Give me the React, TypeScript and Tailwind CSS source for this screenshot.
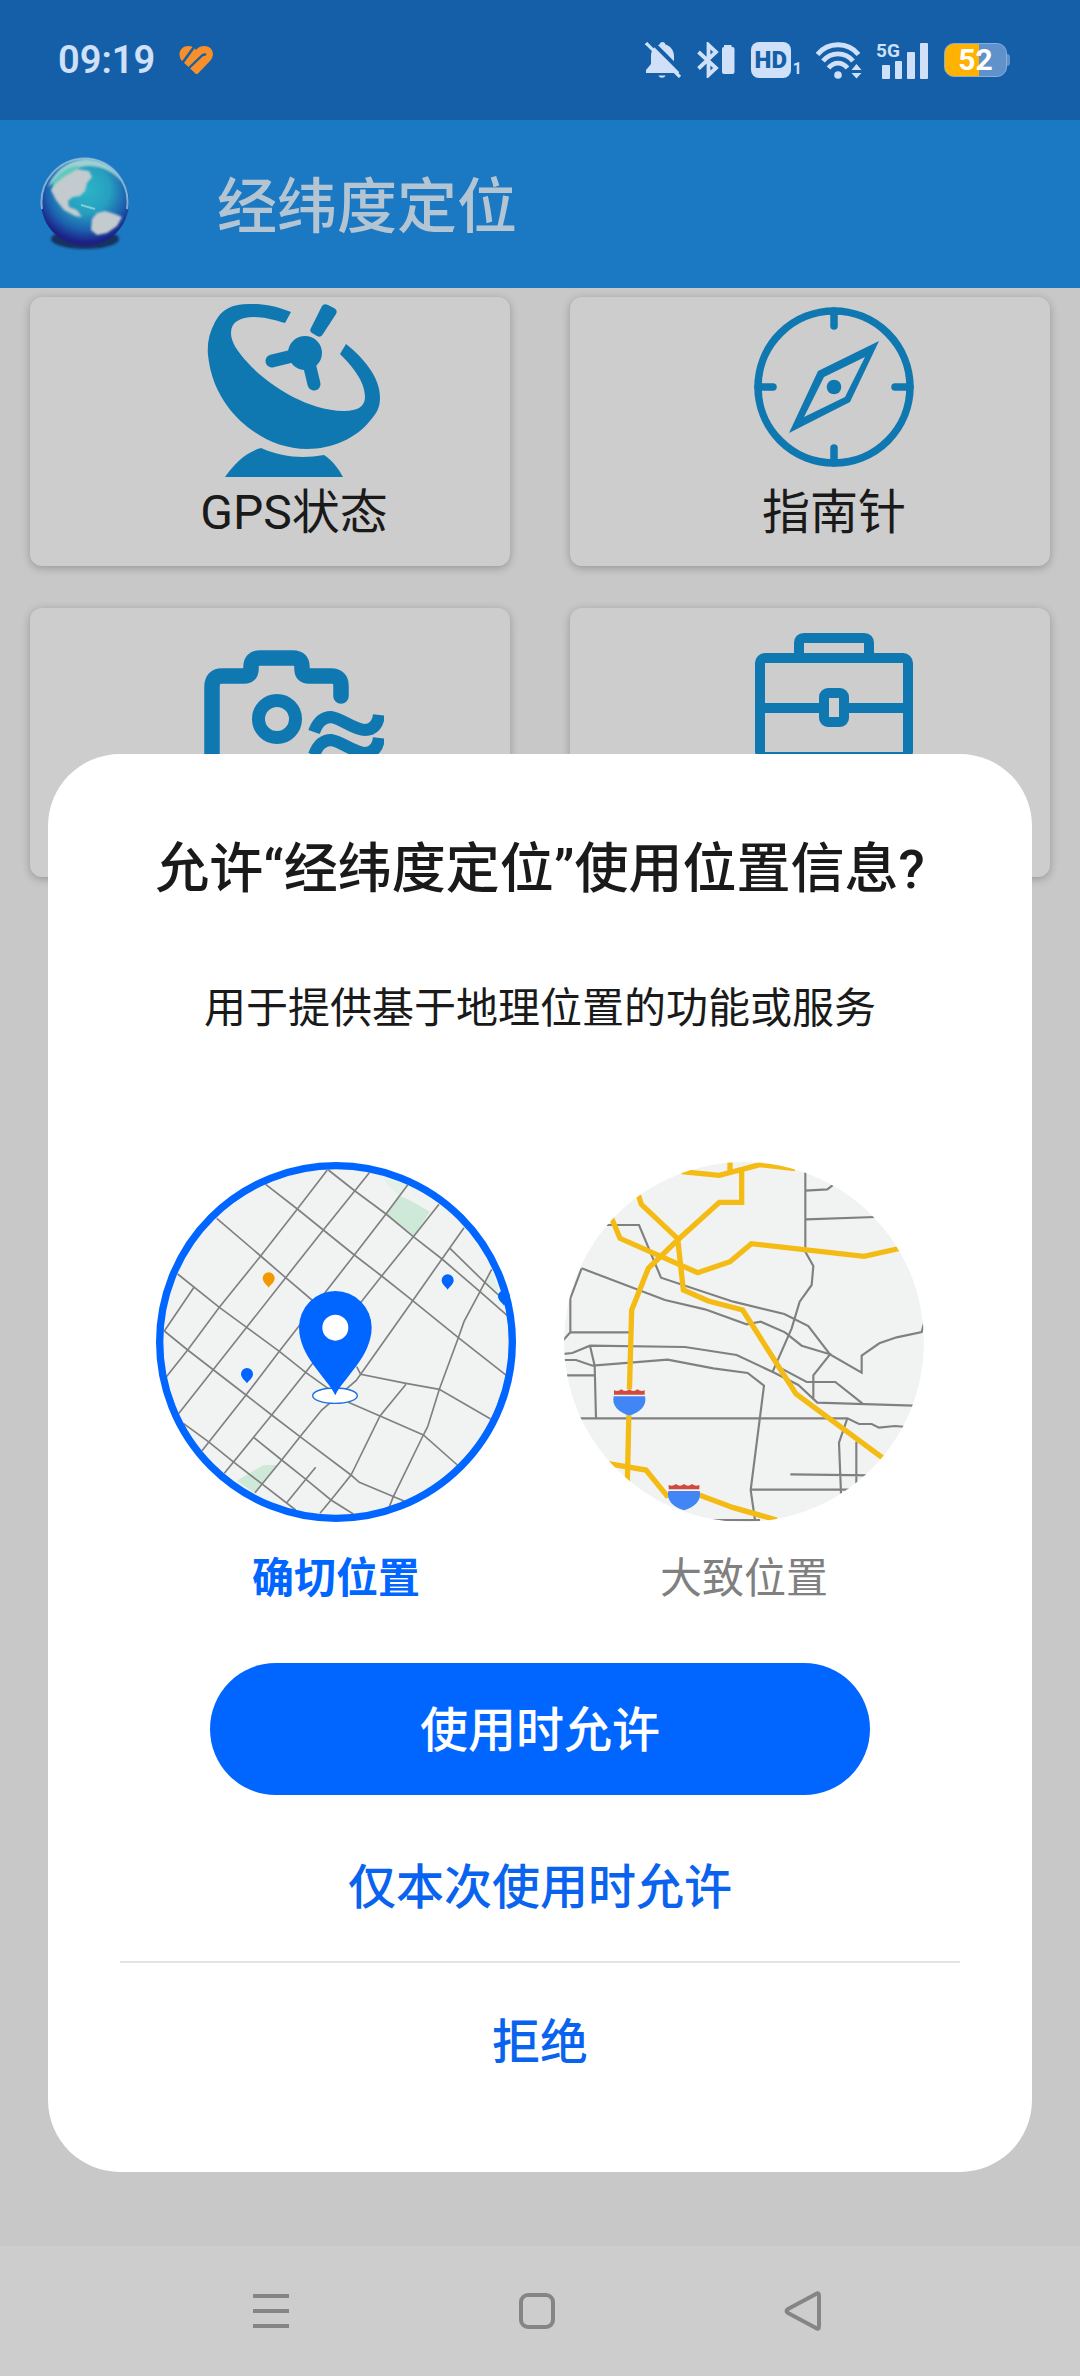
"use client";

import { useState } from "react";

type Accuracy = "precise" | "approximate";

const ICON_BLUE = "#0f78b1";
const STATUS_TINT = "#cfe0f8";

function HeartLogo() {
  return (
    <svg width="34" height="28" viewBox="0 0 34 28" fill="none">
      <path d="M17 28L3 15C-3 7 3 0 9 0C13 0 15 1.500 17 4C19 1.500 22 0 25 0C33 0 37 8 31 15L19 27.500Q17 29 15.500 27Z" fill="#f78f2b" />
      <path d="M16.500-1L3 17.500" stroke="#145fa8" strokeWidth="2.600" />
      <path d="M9 23L22.500 10Q25 7.500 27 9" stroke="#145fa8" strokeWidth="2.400" />
    </svg>
  );
}

function BellOffIcon() {
  return (
    <svg width="38" height="36" viewBox="0 0 38 36" fill={STATUS_TINT}>
      <path d="M17.500 0C15.800 0 14.800 1 14.600 2.500C8.500 4 6 9 6 14V22L1 28V31H34V29L29 22V14C29 9 26 4 20.400 2.500C20.200 1 19.200 0 17.500 0Z" />
      <path d="M13.500 33.500H20.500C19.500 36.500 14.500 36.500 13.500 33.500Z" />
      <path d="M4-3L38 31" stroke="#145fa8" strokeWidth="4" />
      <path d="M1 1L35 35" stroke={STATUS_TINT} strokeWidth="3.200" />
    </svg>
  );
}

function BluetoothIcon() {
  return (
    <svg width="40" height="36" viewBox="0 0 40 36" fill="none">
      <path d="M1.500 10L19 26L11.500 33V3L19 10L1.500 26.500" stroke={STATUS_TINT} strokeWidth="3.800" />
      <path d="M27 4H34.500" stroke={STATUS_TINT} strokeWidth="2" />
      <rect x="25" y="5" width="12.500" height="27" rx="2" fill={STATUS_TINT} />
    </svg>
  );
}

function WifiIcon() {
  return (
    <svg width="46" height="37" viewBox="0 0 46 37" fill="none">
      <g stroke={STATUS_TINT} strokeWidth="4.800">
        <path d="M1.500 12.500C12-.5 32-.5 42.500 12.500" />
        <path d="M7 19C15 9.500 29 9.500 37 19" />
        <path d="M12.500 26C18 19.500 26 19.500 31.500 26" />
      </g>
      <circle cx="22" cy="33" r="3.800" fill={STATUS_TINT} />
      <path d="M40.500 22L45.500 28H35.500ZM40.500 36.500L35.500 31H45.500Z" fill={STATUS_TINT} />
    </svg>
  );
}

function SignalIcon() {
  return (
    <svg className="overflow-visible" width="54" height="49" viewBox="0 -6 54 49" fill={STATUS_TINT}>
      <text x="0" y="15" fontSize="19" fontWeight="700" fontFamily="Roboto, sans-serif">
        5G
      </text>
      <rect x="6" y="23" width="8" height="14" rx="1" />
      <rect x="19" y="19" width="7" height="18" rx="1" />
      <rect x="31" y="10" width="8" height="27" rx="1" />
      <rect x="44" y="1" width="8" height="36" rx="1" />
    </svg>
  );
}

function GlobeLogo() {
  return (
    <svg className="shrink-0" width="92" height="94" viewBox="0 0 92 94" fill="none">
      <defs>
        <radialGradient id="ocean" cx="0.52" cy="0.36" r="0.66">
          <stop offset="0" stopColor="#2cb4c6" />
          <stop offset="0.4" stopColor="#279fc0" />
          <stop offset="0.7" stopColor="#1c5fae" />
          <stop offset="0.9" stopColor="#1c2287" />
          <stop offset="1" stopColor="#241d74" />
        </radialGradient>
        <filter id="soft" x="-20%" y="-20%" width="140%" height="140%">
          <feGaussianBlur stdDeviation="1" />
        </filter>
      </defs>
      <ellipse cx="46" cy="82" rx="34" ry="10" fill="#16305f" filter="url(#soft)" />
      <circle cx="46" cy="45" r="44" fill="url(#ocean)" />
      <path d="M9 30C17 10 34 2 48 2C66 3 78 13 84 26C74 14 62 9 49 9C34 10 24 17 9 30Z" fill="#9fd0d3" filter="url(#soft)" />
      <path d="M3 52C-1 24 20 2 46 1.500C72 2 92 26 88 52" stroke="#9cc4dd" strokeOpacity="0.8" strokeWidth="2" />
      <path d="M14 25C20 15 30 9 40 9L36 18L24 26L14 36Z" fill="#5fcabc" filter="url(#soft)" />
      <g fill="#c3cbcf" filter="url(#soft)">
        <path d="M12 33C16 26 24 20 32 16L38 12L50 14L53 20L48 26L46 34L41 39L34 40L29 44L30 50L38 53L43 60L36 59L25 53L17 43Z" />
        <path d="M53 62L58 56L66 54L76 57L83 60L78 69L68 76L58 78L52 73Z" />
      </g>
      <path d="M42 48L56 52" stroke="#7fcfd6" strokeWidth="2" />
    </svg>
  );
}

function SatelliteIcon() {
  return (
    <svg width="180" height="180" viewBox="0 0 180 180" fill={ICON_BLUE}>
      <path d="M87 12C72 6 60 4 50 4C30 3 18 8 11 22C5 33 3 44 4 55C6 75 13 92 24 107C42 131 72 149 103 149C128 149 152 138 165 122C173 113 176 108 176 97C176 78 160 58 142 44L136 54C146 64 161 80 161 97C161 106 154 111 140 111C122 111 103 104 89 97C68 85 54 74 44 63C33 51 27 42 27 33C27 22 36 17 50 17C60 17 71 20 81 23Z" />
      <circle cx="101" cy="53" r="17" />
      <g stroke={ICON_BLUE} strokeWidth="13" strokeLinecap="round">
        <path d="M101 53L68 61" />
        <path d="M103 55L110 84" />
      </g>
      <path d="M118 6Q120 3 124 5L130 8Q134 10 132 14L119 34Q117 38 113 36L108 33Q105 31 107 28Z" />
      <path d="M21 177C30 164 42 152 57 148C78 157 98 159 120 155C129 161 134 168 139 177Z" />
    </svg>
  );
}

function CompassIcon() {
  return (
    <svg width="180" height="180" viewBox="0 0 180 180" fill="none">
      <circle cx="90" cy="87" r="76" stroke={ICON_BLUE} strokeWidth="7.500" />
      <path d="M90 11V26M90 148V163M14 87H29M151 87H166" stroke={ICON_BLUE} strokeWidth="7.500" strokeLinecap="round" />
      <path
        fillRule="evenodd"
        d="M135 41L106 102L45 133L74 71ZM121 57L80 77L60 117L101 97Z"
        fill={ICON_BLUE}
      />
      <circle cx="90" cy="87" r="7.300" fill={ICON_BLUE} />
    </svg>
  );
}

function CameraIcon() {
  return (
    <svg width="180" height="180" viewBox="0 0 180 180" fill="none" stroke={ICON_BLUE}>
      <path
        d="M8 150V76Q8 65 18 65H40Q47 65 47 58V56Q47 47 56 47H89Q98 47 98 56V58Q98 65 105 65H127Q137 65 137 75V85"
        strokeWidth="15.500"
        strokeLinecap="round"
      />
      <circle cx="73" cy="108" r="18.500" strokeWidth="13" />
      <path d="M110 121C114 110 120 106 127 106C137 107 150 119 161 119C170 119 174 113 175 104" strokeWidth="12" />
      <path d="M110 144C114 133 120 129 127 129C137 130 150 142 161 142C170 142 174 136 175 127" strokeWidth="12" />
    </svg>
  );
}

function BriefcaseIcon() {
  return (
    <svg width="180" height="180" viewBox="0 0 180 180" fill="none" stroke={ICON_BLUE} strokeWidth="10">
      <rect x="16" y="47" width="148" height="99" rx="5" />
      <path d="M55 45V32Q55 27 60 27H120Q125 27 125 32V45" />
      <path d="M16 97H80M100 97H164" />
      <rect x="80" y="82" width="20" height="29" rx="4" />
    </svg>
  );
}

function SmallPin({ x, y, color }: { x: number; y: number; color: string }) {
  return (
    <path
      d="M0 45C-5 36-18 30-18 17A18 18 0 0 1 18 17C18 30 5 36 0 45Z"
      transform={`translate(${x} ${y})`}
      fill={color}
    />
  );
}

function PreciseMap() {
  return (
    <svg className="block w-full" viewBox="48 66 1080 1080" fill="none">
      <circle cx="588" cy="606" r="529" fill="#f1f3f3" />
      <path d="M725 112L805 135L778 170ZM1055 395L1085 475L1035 430Z" fill="#e3f1e8" />
      <path d="M778 168L805 178L870 215L822 287L738 222ZM290 1022L370 975L410 975L345 1060Z" fill="#cfe9d9" />
      <g stroke="#808080" strokeWidth="5">
        <path d="M562 90L472 207L362 348L238 502L143 630L78 712" />
        <path d="M688 98L550 270L437 413L320 562L115 822" />
        <path d="M803 135L738 222L643 345L418 634L318 765L186 932" />
        <path d="M897 193L820 290L725 408L497 697L395 825L253 1000" />
        <path d="M972 263L906 357L818 482L662 703L648 722L545 810L480 890L425 960L345 1058" />
        <path d="M1055 388L1020 455L972 545L955 593L898 748L863 860L850 885L760 1070L748 1100" />
        <path d="M798 733L720 828L648 975L633 1005L573 1080L540 1120" />
        <path d="M527 982L440 1088M162 442L73 573" />
        <path d="M565 90L645 153L738 222L820 290L906 357L1020 455L1102 527" />
        <path d="M377 133L472 207L550 270L643 345L725 408L818 482L955 593L1100 707" />
        <path d="M230 235L362 348L437 413L530 492" />
        <path d="M113 402L238 502L320 562L418 634L497 697L565 746" />
        <path d="M73 573L143 630L318 765L395 825L480 890L633 1005L658 1027L792 1083" />
        <path d="M130 850L205 905L282 967L467 1110" />
        <path d="M342 893L425 960L498 1018L573 1080L640 1122" />
        <path d="M650 680L662 703L798 730L898 748L1052 837" />
        <path d="M625 787L720 828L850 885L952 975" />
        <path d="M930 325L1035 428L1085 474" />
      </g>
      <SmallPin x={386} y={398} color="#f29900" />
      <SmallPin x={923} y={404} color="#0066ff" />
      <SmallPin x={321} y={685} color="#0066ff" />
      <SmallPin x={1092} y={452} color="#0066ff" />
      <ellipse cx="585" cy="767" rx="67" ry="23" fill="#fff" stroke="#1a6fe0" strokeWidth="4" />
      <path d="M586 766C560 712 477 650 477 562A109 109 0 0 1 695 562C695 650 612 712 586 766Z" fill="#0066ff" />
      <circle cx="586" cy="563" r="39" fill="#fff" />
      <circle cx="588" cy="606" r="529" stroke="#0066ff" strokeWidth="22" />
    </svg>
  );
}

function RouteShield({ x, y }: { x: number; y: number }) {
  return (
    <g transform={`translate(${x} ${y})`}>
      <path d="M-48-2H48V18C52 48 30 66 0 78C-30 66-52 48-48 18Z" fill="#f1f3f3" />
      <path d="M-46 0Q-36 7-24-2Q-12 8 0-2Q12 8 24-2Q36 7 46 0V14H-46Z" fill="#d04a3d" />
      <path d="M-47 19H47C54 46 32 68 0 77C-32 68-54 46-47 19Z" fill="#4285f4" />
    </g>
  );
}

function ApproximateMap() {
  return (
    <svg className="block w-full" viewBox="72 66 1080 1080" fill="none">
      <defs>
        <clipPath id="area">
          <circle cx="612" cy="606" r="540" />
        </clipPath>
      </defs>
      <g clipPath="url(#area)">
        <rect x="72" y="66" width="1080" height="1080" fill="#f1f3f3" />
        <g stroke="#808080" strokeWidth="6.500">
          <path d="M796 90V335L820 378L815 435L779 485L755 565L697 697" />
          <path d="M796 152L862 148L885 130M798 238L1005 231" />
          <path d="M195 255H297L363 413L580 485L733 522L805 558L870 643L965 698V647L1018 610L1070 592L1145 576L1152 550" />
          <path d="M125 385L375 480L495 508L620 553L662 545L735 577L785 617L870 643L820 706V775" />
          <path d="M125 385L91 475V577L70 600M91 577H272" />
          <path d="M70 642L97 639L150 617L435 621L590 645L700 697L775 735L832 788L1120 797" />
          <path d="M70 660H108L158 677L383 659L520 685L623 699L672 737L632 1050L645 1140" />
          <path d="M150 617L164 677L168 835M75 706H164M110 835H922L957 852H995L1017 863L1065 858L1100 861" />
          <path d="M718 682L800 726H886L967 790" />
          <path d="M922 835L897 908L903 1060M949 905V1040M751 1003L990 1006M632 1049H940M500 1140H660" />
        </g>
        <g stroke="#f4bb15" strokeWidth="16">
          <path d="M425 95L538 106L660 74L765 86M570 60V98" />
          <path d="M605 88V187H538L413 300L325 385L275 510L268 760L262 1030" />
          <path d="M295 165L304 193L413 296L430 450L505 483L608 510L768 762L912 868L1030 955" />
          <path d="M215 235L240 295L473 398L570 365L634 311L972 349L1085 324" />
          <path d="M200 970L318 990L380 1066L432 1048L580 1103L710 1140" />
        </g>
        <RouteShield x={268} y={750} />
      </g>
      <RouteShield x={432} y={1034} />
    </svg>
  );
}

const tiles = [
  { name: "GPS状态", icon: SatelliteIcon, showLabel: true },
  { name: "指南针", icon: CompassIcon, showLabel: true },
  { name: "水印相机", icon: CameraIcon, showLabel: false },
  { name: "工具箱", icon: BriefcaseIcon, showLabel: false },
];

const accuracyOptions = [
  { value: "precise" as Accuracy, label: "确切位置", map: PreciseMap },
  { value: "approximate" as Accuracy, label: "大致位置", map: ApproximateMap },
];

function StatusBar() {
  return (
    <div className="flex h-[120px] items-center justify-between bg-[#145fa8] pl-[58px] pr-[70px] text-[#cfe0f8]">
      <div className="flex items-center gap-6">
        <span className="text-[38px] font-semibold leading-[44px]">09:19</span>
        <HeartLogo />
      </div>
      <div className="flex items-center gap-[14px]">
        <BellOffIcon />
        <BluetoothIcon />
        <div className="flex items-end gap-[2px]">
          <span className="flex h-9 w-10 items-center justify-center rounded-lg bg-[#cfe0f8] text-[24px] font-black leading-none text-[#145fa8]">
            HD
          </span>
          <span className="text-[16px] font-bold leading-[18px]">1</span>
        </div>
        <WifiIcon />
        <SignalIcon />
        <div className="flex items-center">
          <span className="flex h-[34px] w-[63px] items-center justify-center rounded-[10px] border border-[#86aedb] bg-linear-to-r from-[#ffb300] from-55% to-[#5f92ca] to-55% text-[30px] font-bold leading-none text-white">
            52
          </span>
          <span className="h-3 w-[3px] rounded-r-sm bg-[#5f92ca]" />
        </div>
      </div>
    </div>
  );
}

export default function App() {
  const [accuracy, setAccuracy] = useState<Accuracy>("precise");

  return (
    <div className="flex min-h-screen flex-col bg-[#c8c8c9] font-[Roboto,'Noto_Sans_CJK_SC',sans-serif] text-[#1a1a1a]">
      <StatusBar />

      <header className="flex h-[168px] items-center bg-[#1b78c2] pl-[39px]">
        <GlobeLogo />
        <h1 className="ml-[86px] pt-2 text-[60px] font-medium leading-[72px] text-[#b3c5d3]">经纬度定位</h1>
      </header>

      <main className="relative flex-1">
        <div className="grid grid-cols-2 gap-x-[60px] gap-y-[42px] px-[30px] pt-[9px]">
          {tiles.map(({ name, icon: Icon, showLabel }) => (
            <button
              key={name}
              type="button"
              aria-label={name}
              className="flex h-[269px] flex-col items-center gap-[3px] rounded-xl bg-[#cdcdcd] pl-12 pt-[3px] shadow-[0_2px_8px_rgba(0,0,0,0.25)]"
            >
              <Icon />
              {showLabel && <span className="text-[48px] leading-[60px]">{name}</span>}
            </button>
          ))}
        </div>

        {/* Permission dialog */}
        <div
          role="dialog"
          aria-labelledby="permission-title"
          className="absolute inset-x-12 bottom-[74px] flex flex-col items-center rounded-[72px] bg-white px-[72px] pb-[53px] pt-[80px]"
        >
          <h2 id="permission-title" className="whitespace-nowrap text-[54px] font-medium leading-[72px]">
            允许“经纬度定位”使用位置信息?
          </h2>
          <p className="mt-[73px] text-[42px] leading-[60px]">用于提供基于地理位置的功能或服务</p>

          <div className="mt-[123px] flex gap-12">
            {accuracyOptions.map(({ value, label, map: Map }) => (
              <label key={value} className="group flex w-[360px] cursor-pointer flex-col items-center gap-[27px]">
                <input
                  type="radio"
                  name="accuracy"
                  value={value}
                  checked={accuracy === value}
                  onChange={() => setAccuracy(value)}
                  className="sr-only"
                />
                <Map />
                <span className="text-[42px] leading-[60px] text-[#808080] group-has-checked:font-bold group-has-checked:text-[#0066ff]">
                  {label}
                </span>
              </label>
            ))}
          </div>

          <button
            type="button"
            className="mt-[54px] h-[132px] w-[660px] rounded-full bg-[#0066ff] pt-1 text-[48px] font-medium text-white"
          >
            使用时允许
          </button>
          <button type="button" className="mt-4 h-[150px] w-full pt-1 text-[48px] font-medium text-[#0a63ee]">
            仅本次使用时允许
          </button>
          <hr className="w-full border-t-2 border-[#e4e4e4]" />
          <button type="button" className="h-[156px] w-full pt-1 text-[48px] font-medium text-[#0a63ee]">
            拒绝
          </button>
        </div>
      </main>

      <nav className="grid h-[130px] grid-cols-3 place-items-center bg-[#cdcdcd] pl-[138px] pr-[144px]">
        <button type="button" aria-label="最近任务">
          <svg width="36" height="40" viewBox="0 0 36 40" stroke="#858585" strokeWidth="4">
            <path d="M0 5H36M0 20H36M0 35H36" />
          </svg>
        </button>
        <button type="button" aria-label="主屏幕">
          <svg width="36" height="40" viewBox="0 0 36 40" fill="none" stroke="#858585" strokeWidth="4">
            <rect x="2" y="4" width="32" height="32" rx="7" />
          </svg>
        </button>
        <button type="button" aria-label="返回">
          <svg width="38" height="40" viewBox="0 0 38 40" fill="none" stroke="#858585" strokeWidth="4" strokeLinejoin="round">
            <path d="M32 3Q35 1 35 5V35Q35 39 32 37L4 22Q1 20 4 18Z" />
          </svg>
        </button>
      </nav>
    </div>
  );
}
